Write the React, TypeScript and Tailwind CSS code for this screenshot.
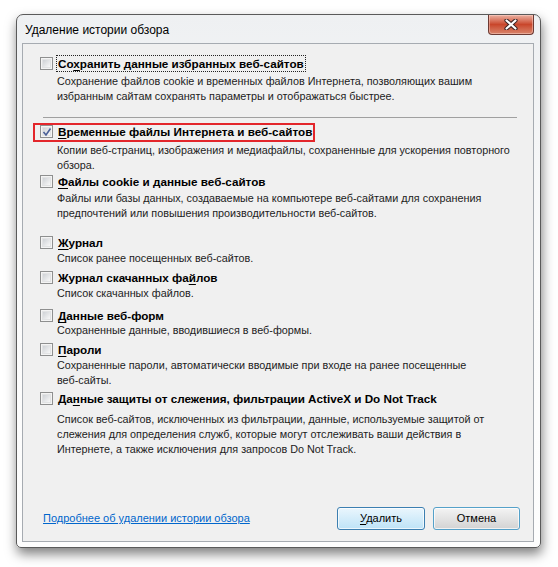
import type { ReactNode } from 'react';

interface Item {
  label: ReactNode;
  desc: string[];
  checked?: boolean;
  focused?: boolean;
  highlighted?: boolean;
  wrap: string;
  descGap: string;
}

const U = ({ children }: { children: ReactNode }) => <span className="underline underline-offset-2">{children}</span>;

const topItem: Item = {
  label: <>Со<U>х</U>ранить данные избранных веб-сайтов</>,
  desc: [
    'Сохранение файлов cookie и временных файлов Интернета, позволяющих вашим',
    'избранным сайтам сохранять параметры и отображаться быстрее.',
  ],
  focused: true,
  wrap: 'mt-[11px]',
  descGap: 'mt-[2px]',
};

const items: Item[] = [
  {
    label: <><U>В</U>ременные файлы Интернета и веб-сайтов</>,
    desc: ['Копии веб-страниц, изображения и медиафайлы, сохраненные для ускорения повторного', 'обзора.'],
    checked: true,
    highlighted: true,
    wrap: 'mt-[5px]',
    descGap: 'mt-[3px]',
  },
  {
    label: <><U>Ф</U>айлы cookie и данные веб-сайтов</>,
    desc: [
      'Файлы или базы данных, создаваемые на компьютере веб-сайтами для сохранения',
      'предпочтений или повышения производительности веб-сайтов.',
    ],
    wrap: 'mt-0',
    descGap: 'mt-[1px]',
  },
  {
    label: <><U>Ж</U>урнал</>,
    desc: ['Список ранее посещенных веб-сайтов.'],
    wrap: 'mt-[13px]',
    descGap: 'mt-0',
  },
  {
    label: <>Журнал скачанных фа<U>й</U>лов</>,
    desc: ['Список скачанных файлов.'],
    wrap: 'mt-[3px]',
    descGap: 'mt-0',
  },
  {
    label: <><U>Д</U>анные веб-форм</>,
    desc: ['Сохраненные данные, вводившиеся в веб-формы.'],
    wrap: 'mt-[6px]',
    descGap: 'mt-[-1px]',
  },
  {
    label: <><U>П</U>ароли</>,
    desc: ['Сохраненные пароли, автоматически вводимые при входе на ранее посещенные', 'веб-сайты.'],
    wrap: 'mt-[3px]',
    descGap: 'mt-0',
  },
  {
    label: <>Да<U>н</U>ные защиты от слежения, фильтрации ActiveX и Do Not Track</>,
    desc: [
      'Список веб-сайтов, исключенных из фильтрации, данные, используемые защитой от',
      'слежения для определения служб, которые могут отслеживать ваши действия в',
      'Интернете, а также исключения для запросов Do Not Track.',
    ],
    wrap: 'mt-[2px]',
    descGap: 'mt-[5px]',
  },
];

function Checkbox({ checked }: { checked?: boolean }) {
  return (
    <span className="relative flex h-[13px] w-[13px] shrink-0 border border-[#8e8f8f] bg-[#f4f4f4] p-[1px]">
      <span className="flex-1 border border-[#e2e3e4] bg-gradient-to-br from-[#cfd2d6] to-[#f8f8f8]" />
      {checked && (
        <svg className="absolute left-[1px] top-[1px]" width="10" height="10" viewBox="0 0 10 10">
          <path d="M1.5 5 L4 8 L8.5 1.5" fill="none" stroke="#4a5f97" strokeWidth="1.6" />
        </svg>
      )}
    </span>
  );
}

function Entry({ item }: { item: Item }) {
  return (
    <div className={`relative ${item.wrap}`}>
      {item.highlighted && (
        <div className="pointer-events-none absolute left-[-7px] top-[0px] h-[19px] w-[282px] border-2 border-[#e3262b]" />
      )}
      <div className="flex h-[17px] items-center gap-[3px]">
        <Checkbox checked={item.checked} />
        <span
          className={`text-[11.7px] font-bold leading-[15px] text-black ${
            item.focused ? 'border border-dotted border-[#222] px-[1px]' : 'px-[2px]'
          }`}
        >
          {item.label}
        </span>
      </div>
      <div className={`pl-[17px] text-[10.8px] leading-[15px] whitespace-nowrap text-[#1c1c1c] ${item.descGap}`}>
        {item.desc.map((line) => (
          <div key={line}>{line}</div>
        ))}
      </div>
    </div>
  );
}

function CloseButton() {
  return (
    <div className="flex h-[20px] w-[46px] items-center justify-center rounded-b-[4px] border border-t-0 border-[#6d3a33] bg-gradient-to-b from-[#eab0a2] via-[#c9462b] to-[#d8846b] shadow-[inset_0_0_0_1px_rgba(255,220,210,0.45)]">
      <svg width="14" height="11" viewBox="0 0 14 11">
        <path d="M2.5 1.5 L11.5 9.5 M11.5 1.5 L2.5 9.5" stroke="#3b2323" strokeWidth="4.2" strokeLinecap="round" />
        <path d="M2.5 1.5 L11.5 9.5 M11.5 1.5 L2.5 9.5" stroke="#ffffff" strokeWidth="2.2" strokeLinecap="round" />
      </svg>
    </div>
  );
}

export default function App() {
  return (
    <div
      className="min-h-screen bg-white pl-[16px] pt-[14px] text-[11px] text-black"
      style={{ fontFamily: "'Liberation Sans', Arial, sans-serif" }}
    >
      <div className="flex h-[534px] w-[525px] flex-col rounded-t-[7px] rounded-b-[5px] border border-[#5a5a5a] bg-gradient-to-b from-[#eef0f2] via-[#fbfbfb] to-[#fdfdfd] pl-[5px] pr-[6px] pb-[5px] shadow-[1px_6px_12px_rgba(0,0,0,0.5)]">
        <div className="flex h-[28px] shrink-0 items-start justify-between">
          <span className="pl-[3px] pt-[8px] text-[12px] leading-[15px] text-black">Удаление истории обзора</span>
          <CloseButton />
        </div>
        <div className="flex flex-1 flex-col border border-[#a6abb1] bg-[#f0f0f0] pl-[17px] pr-[13px] pb-[11px]">
          <Entry item={topItem} />
          <div className="mt-[13px] mr-[3px] ml-[3px] h-px bg-[#a0a0a0]" />
          {items.map((item, i) => (
            <Entry key={i} item={item} />
          ))}
          <div className="mt-auto flex items-center justify-between">
            <a href="#" className="pl-[3px] text-[#0066cc] underline">
              Подробнее об удалении истории обзора
            </a>
            <div className="flex gap-[8px]">
              <button className="h-[23px] w-[88px] rounded-[3px] border border-[#3c7fb1] bg-gradient-to-b from-[#eaf6fd] to-[#bee3f7] text-black shadow-[inset_0_0_0_1px_rgba(255,255,255,0.7)]">
                <U>У</U>далить
              </button>
              <button className="h-[23px] w-[87px] rounded-[3px] border border-[#55a1c9] bg-gradient-to-b from-[#f4f4f4] to-[#d3d3d3] text-black shadow-[inset_0_0_0_1px_rgba(255,255,255,0.7)]">
                Отмена
              </button>
            </div>
          </div>
        </div>
      </div>
    </div>
  );
}
